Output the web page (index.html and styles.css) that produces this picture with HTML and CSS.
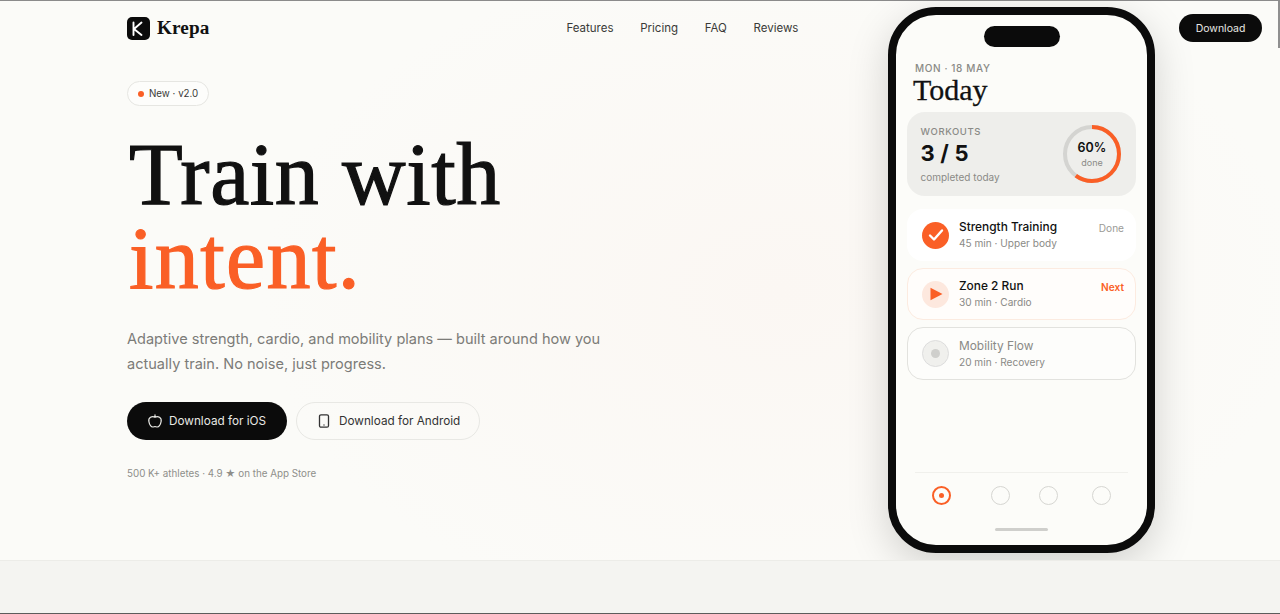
FILE: index.html
```html
<!DOCTYPE html>
<html lang="en">
<head>
	<meta charset="UTF-8">
	<title>Krepa</title>
	<link rel="stylesheet" href="styles.css">
</head>
<body>
	<div class="page">
		<header class="nav">
			<a class="brand">
				<span class="brand-mark">
					<svg width="23" height="23" viewBox="0 0 23 23" fill="none" stroke="#fff" stroke-width="1.9" stroke-linecap="round" stroke-linejoin="round"><path d="M6.500 5.500v12.500M14.500 5.500l-7.500 6.500 7.500 6"/></svg>
				</span>
				<span class="brand-name">Krepa</span>
			</a>
			<nav class="nav-links">
				<a>Features</a>
				<a>Pricing</a>
				<a>FAQ</a>
				<a>Reviews</a>
			</nav>
			<a class="nav-cta">Download</a>
		</header>
		<section class="hero">
			<div class="badge"><i class="badge-dot"></i>New · v2.0</div>
			<h1 class="title">Train with<em>intent.</em></h1>
			<p class="lead">Adaptive strength, cardio, and mobility plans — built around how you actually train. No noise, just progress.</p>
			<div class="actions">
				<a class="btn btn-dark">
					<svg width="16" height="16" viewBox="0 0 16 16" fill="none" stroke="currentColor" stroke-width="1.2" stroke-linecap="round"><path d="M8 4.200C6.800 3.500 4.800 3.400 3.500 4.200 2 5.100 1.500 6.800 1.900 8.700 2.400 11.100 3.800 14 5.800 14c.9 0 1.300-.4 2.200-.4s1.300.4 2.200.4c2 0 3.400-2.900 3.900-5.300.4-1.900-.1-3.600-1.600-4.500C11.200 3.400 9.200 3.500 8 4.200zM8 4V1.800"/></svg>
					Download for iOS
				</a>
				<a class="btn btn-light">
					<svg width="16" height="16" viewBox="0 0 16 16" fill="none" stroke="currentColor" stroke-width="1.3" stroke-linecap="round"><rect x="3.500" y="1.800" width="9" height="12.400" rx="1.500"/><path d="M8 12h.01"/></svg>
					Download for Android
				</a>
			</div>
			<p class="proof">500 K+ athletes · 4.9 ★ on the App Store</p>
		</section>
		<div class="band"></div>

		<div class="phone">
			<div class="island"></div>
			<div class="screen-head">
				<div class="date">MON · 18 MAY</div>
				<div class="today">Today</div>
			</div>
			<div class="summary">
				<div>
					<div class="summary-label">WORKOUTS</div>
					<div class="summary-count">3 / 5</div>
					<div class="summary-note">completed today</div>
				</div>
				<div class="ring">
					<svg width="60" height="60" viewBox="0 0 60 60" fill="none" stroke-width="4"><circle cx="30" cy="30" r="27" stroke="#d4d4d1"/><circle cx="30" cy="30" r="27" stroke="#fa5f26" stroke-dasharray="101.800 169.600" transform="rotate(-90 30 30)"/></svg>
					<div class="ring-text"><b>60%</b><span>done</span></div>
				</div>
			</div>
			<div class="rows">
				<div class="row">
					<span class="ico ico-done"><svg width="18" height="18" viewBox="0 0 18 18" fill="none" stroke="#fff" stroke-width="2.400" stroke-linecap="round" stroke-linejoin="round"><path d="M3 9.500l4 4 8-9"/></svg></span>
					<div class="row-body"><div class="row-title">Strength Training</div><div class="row-sub">45 min · Upper body</div></div>
					<span class="tag">Done</span>
				</div>
				<div class="row row-next">
					<span class="ico ico-next"><svg width="14" height="14" viewBox="0 0 14 14" fill="#fa5f26"><path d="M1.500 .8l12 6.200-12 6.200z"/></svg></span>
					<div class="row-body"><div class="row-title">Zone 2 Run</div><div class="row-sub">30 min · Cardio</div></div>
					<span class="tag tag-next">Next</span>
				</div>
				<div class="row row-todo">
					<span class="ico ico-todo"><i></i></span>
					<div class="row-body"><div class="row-title">Mobility Flow</div><div class="row-sub">20 min · Recovery</div></div>
				</div>
			</div>
			<div class="tabs">
				<span class="tab tab-on"><i></i></span>
				<span class="tab"></span>
				<span class="tab"></span>
				<span class="tab"></span>
			</div>
			<div class="home-bar"></div>
		</div>
		<div class="edge"></div>
	</div>
</body>
</html>
```

FILE: styles.css
```css
*{
	margin:0;
	padding:0;
	box-sizing:border-box;
}
html,body{
	width:100%;
	height:100%;
}
body{
	background:#fbfbf8;
	color:#111;
	font-family:Inter,"Liberation Sans",sans-serif;
	overflow:hidden;
}
.page{
	position:relative;
	height:614px;
	display:flex;
	flex-direction:column;
	border-top:1px solid #8b8b8b;
	border-bottom:1px solid #5c5c5c;
	background:radial-gradient(520px 340px at 780px 290px,#fbf7f3,rgba(251,251,248,0));
}
.nav{
	height:54px;
	padding:0 18px 0 127px;
	display:flex;
	align-items:center;
}
.brand{
	display:flex;
	align-items:center;
	gap:7px;
}
.brand-mark{
	width:23px;
	height:23px;
	border-radius:5px;
	background:#0b0b0b;
	display:flex;
	align-items:center;
	justify-content:center;
}
.brand-name{
	font-family:"Liberation Serif",serif;
	font-size:19.2px;
	font-weight:700;
	letter-spacing:.1px;
}
.nav-links{
	margin-left:357px;
	display:flex;
	gap:26.7px;
	font-size:11.5px;
	color:#3a3a38;
}
.nav-cta{
	margin-left:auto;
	width:83px;
	height:28px;
	border-radius:14px;
	background:#0b0b0b;
	color:#e8e8e4;
	font-size:10.5px;
	display:flex;
	align-items:center;
	justify-content:center;
}
.hero{
	flex:1;
	padding:26px 0 0 127px;
}
.badge{
	width:82px;
	height:25px;
	border:1px solid #e6e6e2;
	border-radius:13px;
	background:#fdfdfb;
	font-size:9.75px;
	color:#3a3a38;
	display:flex;
	align-items:center;
	gap:5px;
	padding-left:10px;
}
.badge-dot{
	width:6px;
	height:6px;
	border-radius:50%;
	background:#fa5f26;
}
.title{
	margin-top:27px;
	padding-left:2px;
	font-family:"Liberation Serif",serif;
	font-size:88px;
	font-weight:400;
	line-height:84px;
	letter-spacing:.6px;
	color:#111;
	-webkit-text-stroke:1.2px currentColor;
}
.title em{
	display:block;
	font-style:normal;
	letter-spacing:1.4px;
	color:#fa5f26;
}
.lead{
	margin-top:26px;
	width:490px;
	font-size:14.55px;
	line-height:25px;
	color:#7c7c78;
}
.actions{
	margin-top:25px;
	display:flex;
	gap:9px;
}
.btn{
	height:38px;
	border-radius:19px;
	font-size:11.75px;
	display:flex;
	align-items:center;
}
.btn-dark{
	width:160px;
	padding-left:20px;
	gap:6px;
	background:#0b0b0b;
	color:#e8e8e4;
}
.btn-light{
	width:184px;
	padding-left:19px;
	gap:7px;
	border:1px solid #e8e8e4;
	color:#333;
}
.proof{
	margin-top:28px;
	font-size:9.8px;
	line-height:12px;
	color:#8e8e8a;
}
.band{
	position:relative;
	z-index:2;
	height:53px;
	background:#f4f4f1;
	border-top:1px solid #ecece8;
}
.phone{
	position:absolute;
	left:888px;
	top:6px;
	width:267px;
	height:546px;
	border:8px solid #0b0b0b;
	border-radius:48px;
	background:#fcfcf9;
	box-shadow:0 12px 40px rgba(0,0,0,.17);
	display:flex;
	flex-direction:column;
	padding:0 11px;
}
.island{
	width:76px;
	height:21px;
	border-radius:11px;
	background:#0b0b0b;
	margin:11px auto 0;
}
.screen-head{
	margin-top:15px;
	padding-left:6px;
}
.date{
	font-size:10px;
	font-weight:500;
	letter-spacing:.6px;
	color:#8a8a86;
	padding-left:2px;
}
.today{
	font-family:"Liberation Serif",serif;
	font-size:30px;
	line-height:32px;
	-webkit-text-stroke:.3px currentColor;
}
.summary{
	margin-top:6px;
	height:84px;
	border-radius:18px;
	background:#eeeeeb;
	display:flex;
	align-items:center;
	justify-content:space-between;
	padding:0 14px 0 13.5px;
}
.summary-label{
	font-size:9.5px;
	font-weight:500;
	letter-spacing:.6px;
	color:#8a8a86;
}
.summary-count{
	margin-top:2px;
	font-size:22px;
	font-weight:700;
	line-height:28px;
	letter-spacing:.2px;
}
.summary-note{
	margin-top:4px;
	font-size:10px;
	color:#8a8a86;
}
.ring{
	position:relative;
	width:60px;
	height:60px;
}
.ring-text{
	position:absolute;
	inset:0;
	display:flex;
	flex-direction:column;
	align-items:center;
	justify-content:center;
}
.ring-text b{
	font-size:12.5px;
	font-weight:600;
}
.ring-text span{
	margin-top:2px;
	font-size:9px;
	color:#8a8a86;
}
.rows{
	margin-top:13px;
	display:flex;
	flex-direction:column;
	gap:7px;
}
.row{
	height:52px;
	border:1px solid transparent;
	border-radius:16px;
	background:#fff;
	display:flex;
	align-items:center;
	padding:0 11px 0 14px;
	gap:10px;
}
.row-next{
	border-color:#fcebe0;
	background:#fffdfb;
}
.row-todo{
	height:53px;
	border:1.5px solid #e2e2de;
	background:#fdfdfb;
}
.ico{
	width:27px;
	height:27px;
	border-radius:50%;
	flex:none;
	display:flex;
	align-items:center;
	justify-content:center;
}
.ico-done{
	background:#fa5f26;
}
.ico-next{
	background:#fde8de;
}
.ico-todo{
	background:#f0f0ed;
	border:1px solid #ddd;
}
.ico-todo i{
	width:9px;
	height:9px;
	border-radius:50%;
	background:#cfcfcc;
}
.row-body{
	flex:1;
	padding-bottom:2px;
}
.row-title{
	font-size:11.9px;
	font-weight:500;
	line-height:16px;
}
.row-sub{
	margin-top:2px;
	font-size:10.1px;
	color:#8a8a86;
}
.row-todo .row-title{
	font-weight:400;
	color:#8a8a86;
}
.tag{
	align-self:flex-start;
	margin-top:12px;
	font-size:10.1px;
	color:#9a9a96;
}
.tag-next{
	font-weight:600;
	color:#fa5f26;
}
.tabs{
	margin-top:auto;
	margin-left:8px;
	margin-right:8px;
	height:46px;
	border-top:1px solid #f0f0ec;
	display:flex;
	align-items:center;
	padding-left:17px;
	gap:40px;
}
.tab{
	width:19px;
	height:19px;
	border-radius:50%;
	border:1.5px solid #d6d6d2;
}
.tab:nth-child(3){
	margin-left:-11px;
}
.tab:nth-child(4){
	margin-left:-6px;
}
.tab-on{
	border:2px solid #fa5f26;
	display:flex;
	align-items:center;
	justify-content:center;
}
.tab-on i{
	width:5px;
	height:5px;
	border-radius:50%;
	background:#fa5f26;
}
.home-bar{
	width:53px;
	height:3px;
	border-radius:2px;
	background:#cfcfcc;
	margin:10px auto 14px;
}
.edge{
	position:absolute;
	right:0;
	top:0;
	width:2px;
	height:47px;
	background:#8f8f8f;
}
```
